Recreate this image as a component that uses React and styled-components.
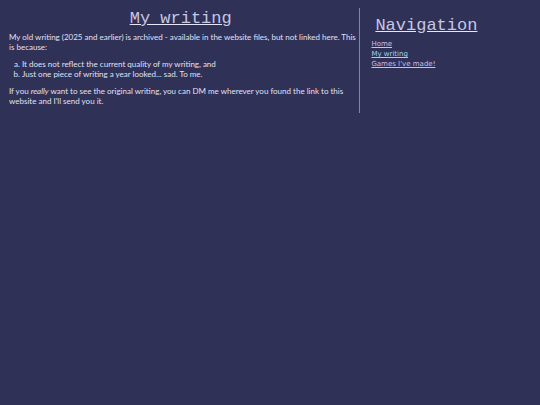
import React from 'react'
import styled, { createGlobalStyle } from 'styled-components'

const links = [
    { label: 'Home', href: '#home' },
    { label: 'My writing', href: '#writing', active: true },
    { label: "Games I've made!", href: '#games' },
]

function App() {
    return (
        <>
            <GlobalStyle />
            <Page>
                <main>
                    <Title>My writing</Title>
                    <Text>
                        My old writing (2025 and earlier) is archived - available in the website files, but not linked here. This is because:
                    </Text>
                    <Reasons>
                        <li>It does not reflect the current quality of my writing, and</li>
                        <li>Just one piece of writing a year looked... sad. To me.</li>
                    </Reasons>
                    <Text>
                        If you <em>really</em> want to see the original writing, you can DM me wherever you found the link to this website and I'll send you it.
                    </Text>
                </main>
                <Sidebar>
                    <NavTitle>Navigation</NavTitle>
                    {links.map(({ label, href, active }) => (
                        <NavLink key={label} href={href} $active={active}>{label}</NavLink>
                    ))}
                </Sidebar>
            </Page>
        </>
    )
}

export default App

const GlobalStyle = createGlobalStyle`
    body {
        margin: 8px 8px 8px 9px;
        background: #2f3157;
        color: #e0e0f4;
        font-family: Lato, Verdana, sans-serif;
        font-size: 8px;
        line-height: 10px;
    }
`
const Page = styled.div`
    display: grid;
    grid-template-columns: 67% 1fr;
`
const Title = styled.h1`
    margin: 0 0 2px;
    padding-right: 7px;
    font-family: "Liberation Mono", "Courier New", monospace;
    font-size: 17px;
    font-weight: 400;
    line-height: 22px;
    color: #c6c7e2;
    text-align: center;
    text-decoration: underline #e6e6fa;
`
const NavTitle = styled(Title)`
    margin: 7px 0 2px 4px;
    text-align: left;
`
const Text = styled.p`
    margin: 0 0 7px;
`
const Reasons = styled.ol`
    margin: 0 0 7px;
    padding-left: 13px;
    list-style: lower-alpha;
`
const Sidebar = styled.nav`
    display: flex;
    flex-direction: column;
    align-items: flex-start;
    padding-left: 11px;
    border-left: 1px solid #8485a8;
    font-family: "DejaVu Sans", Verdana, sans-serif;
    font-size: 7px;
`
const NavLink = styled.a`
    color: ${props => props.$active ? '#a3d5e0' : '#cdbfe6'};
`
